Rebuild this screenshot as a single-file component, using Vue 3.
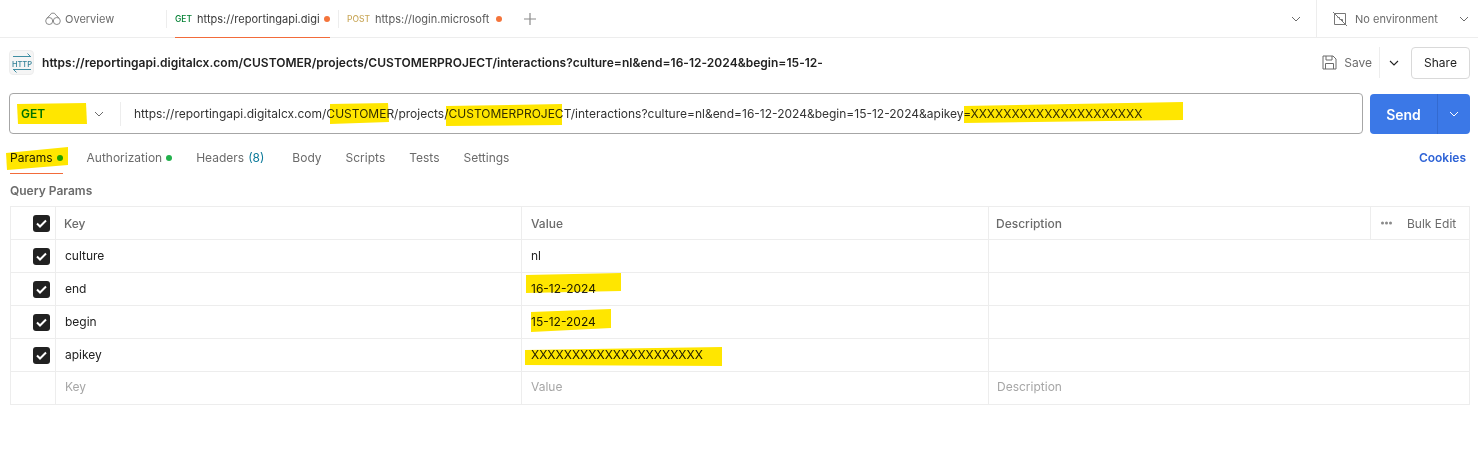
<script setup>
const rows = [
  { key: 'culture', value: 'nl' },
  { key: 'end', value: '16-12-2024' },
  { key: 'begin', value: '15-12-2024' },
  { key: 'apikey', value: 'XXXXXXXXXXXXXXXXXXXXX' },
]
const marks = [
  '17,104 86,103 87,124 18,124',
  '330,104 388,103 389,122 330,124',
  '446,106 562,104 562,125 446,126',
  '964,106 1183,102 1183,120 964,123',
  '6,153 68,147 68,165 7,170',
  '526,275 621,273 621,291 526,293',
  '531,312 611,309 611,328 531,332',
  '525,350 722,347 722,366 525,365',
]
const url = 'https://reportingapi.digitalcx.com/CUSTOMER/projects/CUSTOMERPROJECT/interactions?culture=nl&end=16-12-2024&begin=15-12-2024&apikey=XXXXXXXXXXXXXXXXXXXXX'
</script>

<template>
  <div class="page">
    <header class="tabbar">
      <div class="overview">
        <svg width="16" height="14" viewBox="0 0 16 14" fill="none" stroke="#8a8a8a" stroke-width="1">
          <circle cx="4.2" cy="9" r="3.5" />
          <circle cx="11.8" cy="9" r="3.5" />
          <path d="M5 3.2 6.600 1.200h2.800L11 3.200M2 6l3-2.800M14 6l-3-2.800M7.700 9h.600" />
        </svg>
        <span>Overview</span>
      </div>
      <div class="sep"></div>
      <div class="tab active">
        <span class="verb get">GET</span>
        <span class="tab-url">https://reportingapi.digi</span>
        <i class="dot"></i>
      </div>
      <div class="sep"></div>
      <div class="tab second">
        <span class="verb post">POST</span>
        <span class="tab-url">https://login.microsoft</span>
        <i class="dot"></i>
      </div>
      <svg class="plus" width="12" height="12" viewBox="0 0 12 12" stroke="#8a8a8a" stroke-width="1.200">
        <path d="M6 0v12M0 6h12" />
      </svg>
      <svg class="chev tab-chev" width="10" height="6" viewBox="0 0 10 6" fill="none" stroke="#6b6b6b">
        <path d="M1 1l4 4 4-4" />
      </svg>
      <div class="env">
        <svg width="16" height="16" viewBox="0 0 16 16" fill="none" stroke="#777" stroke-width="1">
          <path d="M2.500 2.500h11v11h-11zM1 1l14 14M5.500 6.500h2v2M8.500 8.500h2v2" />
        </svg>
        <span>No environment</span>
        <svg class="chev" width="10" height="6" viewBox="0 0 10 6" fill="none" stroke="#6b6b6b">
          <path d="M1 1l4 4 4-4" />
        </svg>
      </div>
    </header>

    <section class="titlerow">
      <div class="http-badge">
        <svg width="22" height="22" viewBox="0 0 22 22" fill="none" stroke="#3f8ea3" stroke-width="1">
          <path d="M2 4.500h18M16.500 1.500l3 3M20 17.500H2M5.500 20.500l-3-3" />
          <text x="11" y="14.500" text-anchor="middle" class="http-text">HTTP</text>
        </svg>
      </div>
      <div class="title">https://reportingapi.digitalcx.com/CUSTOMER/projects/CUSTOMERPROJECT/interactions?culture=nl&amp;end=16-12-2024&amp;begin=15-12-</div>
      <div class="save">
        <svg width="15" height="15" viewBox="0 0 15 15" fill="none" stroke="#6b6b6b" stroke-width="1">
          <path d="M1 1h10l3 3v10H1zM4 1v4h6V1M3.500 14V8.500h8V14" />
        </svg>
        <span>Save</span>
      </div>
      <div class="save-more">
        <svg width="10" height="6" viewBox="0 0 10 6" fill="none" stroke="#222" stroke-width="1.100">
          <path d="M1 1l4 4 4-4" />
        </svg>
      </div>
      <button class="share">Share</button>
    </section>

    <section class="requestrow">
      <div class="urlbox">
        <div class="method">
          <span>GET</span>
          <svg width="10" height="6" viewBox="0 0 10 6" fill="none" stroke="#6b6b6b">
            <path d="M1 1l4 4 4-4" />
          </svg>
        </div>
        <div class="url">{{ url }}</div>
      </div>
      <div class="send">
        <span class="send-label">Send</span>
        <span class="send-more">
          <svg width="10" height="6" viewBox="0 0 10 6" fill="none" stroke="#fff">
            <path d="M1 1l4 4 4-4" />
          </svg>
        </span>
      </div>
    </section>

    <nav class="subtabs">
      <span class="subtab current">Params<i class="green"></i></span>
      <span class="subtab">Authorization<i class="green"></i></span>
      <span class="subtab headers">Headers <em>(8)</em></span>
      <span class="subtab">Body</span>
      <span class="subtab">Scripts</span>
      <span class="subtab">Tests</span>
      <span class="subtab">Settings</span>
      <span class="cookies">Cookies</span>
    </nav>

    <div class="qp">Query Params</div>

    <div class="table">
      <div class="row head">
        <div class="c check"><span class="box"><svg width="11" height="9" viewBox="0 0 11 9" fill="none" stroke="#fff" stroke-width="2"><path d="M1 4.500l3 3 6-6" /></svg></span></div>
        <div class="c key">Key</div>
        <div class="c val">Value</div>
        <div class="c desc">
          <span>Description</span>
          <div class="bulk">
            <svg class="dots" width="11" height="4" viewBox="0 0 11 4" fill="#8a8a8a">
              <circle cx="1.500" cy="2" r="1.500" /><circle cx="5.500" cy="2" r="1.500" /><circle cx="9.500" cy="2" r="1.500" />
            </svg>
            <span>Bulk Edit</span>
          </div>
        </div>
      </div>
      <div v-for="r in rows" :key="r.key" class="row">
        <div class="c check"><span class="box"><svg width="11" height="9" viewBox="0 0 11 9" fill="none" stroke="#fff" stroke-width="2"><path d="M1 4.500l3 3 6-6" /></svg></span></div>
        <div class="c key body">{{ r.key }}</div>
        <div class="c val body">{{ r.value }}</div>
        <div class="c desc"></div>
      </div>
      <div class="row last">
        <div class="c check"></div>
        <div class="c key ph">Key</div>
        <div class="c val ph">Value</div>
        <div class="c desc ph">Description</div>
      </div>
    </div>

    <svg class="marks" width="1478" height="452" viewBox="0 0 1478 452">
      <polygon v-for="m in marks" :key="m" :points="m" fill="#ffe600" />
    </svg>
  </div>
</template>

<style scoped>
.page { position: relative; width: 1478px; height: 452px; overflow: hidden; background: #fff; font-family: Inter, "Liberation Sans", sans-serif; font-size: 12px; color: #212121; }
.tabbar { display: flex; align-items: center; height: 38px; border-bottom: 1px solid #ededed; box-sizing: border-box; color: #6b6b6b; }
.overview { display: flex; align-items: center; gap: 4px; width: 121px; padding-left: 45px; color: #6b6b6b; font-size: 11px; }
.sep { width: 1px; height: 18px; background: #ededed; }
.tab { position: relative; display: flex; align-items: center; height: 37px; white-space: nowrap; }
.tab.active { margin-left: 8px; width: 163px; box-sizing: border-box; }
.tab.active::after { content: ""; position: absolute; left: 0; width: 155px; bottom: -1px; height: 1px; background: #f26b3a; }
.tab.second { margin-left: 8px; width: 177px; }
.verb { font-size: 8.500px; font-weight: 500; margin-right: 5px; }
.get { color: #007f31; }
.post { color: #ad7a03; opacity: .65; }
.tab-url { display: block; font-size: 11px; letter-spacing: .02px; color: #3a3a3a; width: 122px; }
.second .tab-url { width: 116px; color: #5a5a5a; letter-spacing: 0; }
.dot { display: block; width: 6px; height: 6px; border-radius: 50%; background: #f4743b; margin-left: 5px; }
.plus { flex: none; }
.chev { display: block; flex: none; }
.tab-chev { margin-left: 755px; }
.env { display: flex; align-items: center; height: 37px; margin-left: 15px; padding-left: 15px; border-left: 1px solid #ededed; font-size: 11px; color: #6b6b6b; flex: 1; }
.env span { margin-left: 7px; width: 104px; }
.titlerow { display: flex; align-items: center; height: 50px; padding: 0 8px 1px 9px; box-sizing: border-box; }
.http-badge { display: flex; align-items: center; justify-content: center; width: 25px; height: 25px; background: #f5f5f5; border: 1px solid #ededed; border-radius: 4px; box-sizing: border-box; }
.http-text { font-family: Inter, sans-serif; font-size: 7.500px; font-weight: 500; fill: #2f7f95; stroke: none; }
.title { margin-left: 8px; font-weight: 600; font-size: 12px; letter-spacing: .03px; flex: 1; white-space: nowrap; color: #212121; }
.save { display: flex; align-items: center; gap: 7px; color: #6b6b6b; font-size: 12px; padding-right: 7px; }
.save-more { display: flex; align-items: center; justify-content: center; height: 31px; width: 32px; border-left: 1px solid #ededed; box-sizing: border-box; padding-right: 4px; }
.share { width: 59px; height: 32px; background: #fff; border: 1px solid #d9d9d9; border-radius: 4px; font: inherit; color: #212121; padding: 0; }
.requestrow { display: flex; height: 42px; padding: 5px 8px 0 9px; gap: 7px; }
.urlbox { display: flex; align-items: center; flex: 1; height: 41px; border: 1px solid #a6a6a6; border-radius: 4px; box-sizing: border-box; }
.method { display: flex; align-items: center; justify-content: space-between; width: 111px; height: 24px; padding: 0 16px 0 11px; box-sizing: border-box; border-right: 1px solid #ededed; color: #007f31; font-weight: 600; }
.url { margin-left: 13px; white-space: nowrap; color: #333; }
.send { display: flex; width: 100px; height: 40px; margin-top: 1px; background: #3b78e7; border-radius: 4px; color: #fff; }
.send-label { width: 67px; display: flex; align-items: center; justify-content: center; font-size: 14px; font-weight: 600; border-right: 1px solid #336ad0; }
.send-more { flex: 1; display: flex; align-items: center; justify-content: center; }
.subtabs { display: flex; align-items: center; height: 27px; margin-top: 9px; padding: 0 12px 0 10px; color: #6b6b6b; gap: 24px; position: relative; }
.subtab { display: flex; align-items: center; height: 27px; position: relative; }
.subtab em { font-style: normal; color: #0c7a9a; margin-left: 4px; }
.headers { margin-right: 4px; }
.current { color: #212121; }
.current::after { content: ""; position: absolute; left: 0; right: 0; bottom: -3px; height: 1px; background: #f26b3a; }
.green { display: block; width: 6px; height: 6px; border-radius: 50%; background: #22b14c; margin-left: 4px; }
.cookies { margin-left: auto; color: #2e63d6; font-weight: 600; }
.qp { margin: 12px 0 0 10px; height: 23px; font-weight: 600; font-size: 12px; color: #6b6b6b; }
.table { margin: 0 8px 0 10px; border-top: 1px solid #ededed; border-left: 1px solid #ededed; border-right: 1px solid #ededed; }
.row { display: flex; height: 33px; border-bottom: 1px solid #ededed; box-sizing: border-box; }
.c { display: flex; align-items: center; box-sizing: border-box; border-right: 1px solid #ededed; }
.check { width: 45px; justify-content: flex-end; padding-right: 5px; }
.key { width: 466px; padding-left: 8px; }
.val { width: 467px; padding-left: 9px; }
.desc { flex: 1; padding-left: 7px; border-right: 0; justify-content: space-between; }
.head .c { font-weight: 500; color: #6b6b6b; }
.key.body, .val.body { color: #212121; padding-bottom: 2px; }
.key.body { padding-left: 9px; }
.box { flex: none; display: flex; align-items: center; justify-content: center; width: 17px; height: 17px; background: #212121; border-radius: 3px; }
.bulk { display: flex; align-items: center; height: 32px; width: 99px; border-left: 1px solid #ededed; box-sizing: border-box; padding-left: 10px; font-weight: 400; }
.dots { margin-right: 15px; flex: none; }
.ph { color: #a6a6a6; padding-bottom: 3px; }
.key.ph { padding-left: 9px; }
.desc.ph { padding-left: 8px; }
.marks { position: absolute; left: 0; top: 0; mix-blend-mode: multiply; pointer-events: none; }
</style>
